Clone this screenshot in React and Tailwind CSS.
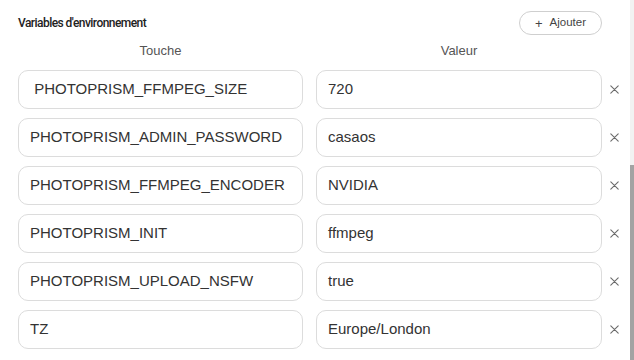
import React from "react";

const envVars = [
  { key: " PHOTOPRISM_FFMPEG_SIZE", value: "720" },
  { key: "PHOTOPRISM_ADMIN_PASSWORD", value: "casaos" },
  { key: "PHOTOPRISM_FFMPEG_ENCODER", value: "NVIDIA" },
  { key: "PHOTOPRISM_INIT", value: "ffmpeg" },
  { key: "PHOTOPRISM_UPLOAD_NSFW", value: "true" },
  { key: "TZ", value: "Europe/London" },
];

function CloseIcon() {
  return (
    <svg width="9" height="9" viewBox="0 0 9 9" fill="none">
      <path d="M0.8 0.8 L8.2 8.2 M8.2 0.8 L0.8 8.2" stroke="#6b6b6b" strokeWidth="1.1" strokeLinecap="round" />
    </svg>
  );
}

function App() {
  return (
    <div
      className="w-[634px] h-[360px] flex overflow-hidden bg-white text-[#333]"
      style={{ fontFamily: '"Liberation Sans", Arial, sans-serif' }}
    >
      <div className="w-[630px] shrink-0 pl-[18px] pt-[11px]">
        {/* Header */}
        <div className="flex items-center justify-between h-[24px] w-[584px]">
          <h3 className="text-[12px] font-medium tracking-[-0.55px] text-[#222] font-['Roboto',sans-serif]">
            Variables d'environnement
          </h3>
          <button className="w-[83px] h-[24px] rounded-full border border-[#cfcfcf] text-[11.5px] text-[#444] flex items-center justify-center gap-[7px]">
            <span className="text-[13px] leading-none">+</span>
            <span>Ajouter</span>
          </button>
        </div>

        {/* Column labels */}
        <div className="flex gap-[13px] mt-[8px] text-[13px] leading-[16px] text-[#555]">
          <div className="w-[285px] text-center">Touche</div>
          <div className="w-[286px] text-center">Valeur</div>
        </div>

        {/* Rows */}
        <div className="flex flex-col gap-[9px] mt-[11px]">
          {envVars.map((item) => (
            <div key={item.key} className="flex items-center h-[39px]">
              <div className="w-[285px] h-full rounded-[10px] border border-[#dcdcdc] flex items-center px-[11px] text-[15px] whitespace-pre text-[#333]">
                {item.key}
              </div>
              <div className="w-[286px] ml-[13px] h-full rounded-[10px] border border-[#dcdcdc] flex items-center px-[11px] text-[15px] text-[#333]">
                {item.value}
              </div>
              <div className="w-[24px] flex justify-center">
                <CloseIcon />
              </div>
            </div>
          ))}
        </div>
      </div>

      {/* Scrollbar */}
      <div className="w-[4px] h-full bg-[#f2f2f2] flex flex-col pt-[165px]">
        <div className="flex-1 bg-[#a3a3a3]" />
      </div>
    </div>
  );
}

export default App;
